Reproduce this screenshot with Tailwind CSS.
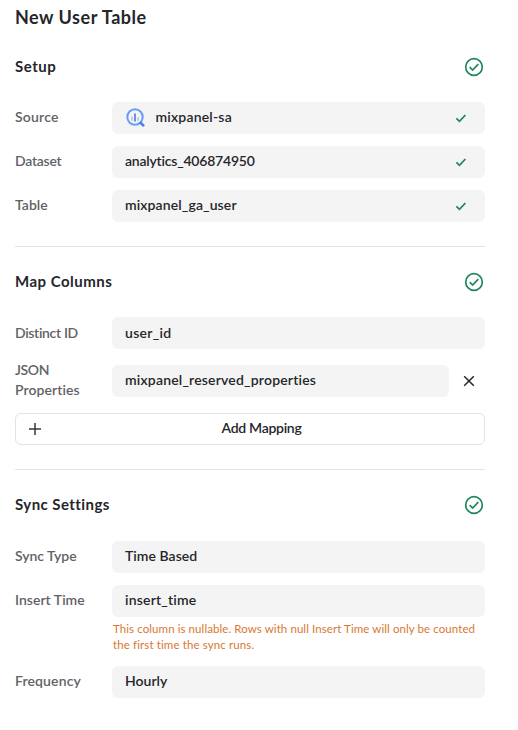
<!DOCTYPE html>
<html lang="en">
<head>
<meta charset="utf-8">
<title>New User Table</title>
<script src="https://cdn.jsdelivr.net/npm/@tailwindcss/browser@4"></script>
</head>
<body class="bg-white font-['Lato','Open_Sans',sans-serif] text-[#25262b] text-[14px] leading-5 font-semibold">
<svg class="hidden">
  <symbol id="done" viewBox="0 0 20 20"><g fill="none" stroke="#21875d" stroke-width="1.7"><circle cx="10" cy="10" r="8.3"/><path d="M5.7 10.2 8.6 13.1 14.3 7.2"/></g></symbol>
  <symbol id="check" viewBox="0 0 12 12"><path d="M1.4 6.3 4.5 9.3 10.4 3" fill="none" stroke="#21875d" stroke-width="1.8"/></symbol>
</svg>
<main class="w-[518px] h-[730px] pl-[15px] pr-[33px] pt-[5px] overflow-hidden">
  <h1 class="h-6 leading-6 text-[18px] font-bold tracking-[0.52px]">New User Table</h1>

  <section class="pt-[26px] pb-6 border-b border-[#e3e3e4]">
    <header class="flex h-[22px] mt-[1px] items-center justify-between"><h2 class="pb-0.5 text-[15px] font-bold tracking-[0.5px]">Setup</h2><svg class="size-5 mr-[1px]"><use href="#done"/></svg></header>
    <div class="mt-6 flex flex-col gap-3">
      <div class="flex h-8 items-center"><span class="w-[97px] pb-0.5 text-[#626266] tracking-[0.22px]">Source</span>
        <div class="flex h-8 flex-1 items-center rounded-md bg-[#f4f4f4] pl-[13px] pr-[18px]">
          <svg class="mr-[10.5px] size-5" viewBox="0 0 20 20" fill="none"><circle cx="10" cy="9" r="7.7" stroke="#6b9bf7" stroke-width="2"/><path d="M14.8 14 19 18.2" stroke="#4d80e8" stroke-width="2.6"/><path d="M10 5.5v8" stroke="#4d80e8" stroke-width="1.7"/><path d="M7 8.5v4.2M13 9.2v3.5" stroke="#a5c1fa" stroke-width="1.5"/></svg>
          <span class="flex-1 pb-0.5 tracking-[0.2px]">mixpanel-sa</span><svg class="size-3"><use href="#check"/></svg>
        </div>
      </div>
      <div class="flex h-8 items-center"><span class="w-[97px] pb-0.5 text-[#626266] tracking-[-0.25px]">Dataset</span>
        <div class="flex h-8 flex-1 items-center rounded-md bg-[#f4f4f4] pl-[13px] pr-[18px]"><span class="flex-1 pb-0.5 tracking-[-0.21px]">analytics_406874950</span><svg class="size-3"><use href="#check"/></svg></div>
      </div>
      <div class="flex h-8 items-center"><span class="w-[97px] pb-0.5 text-[#626266] tracking-[0.05px]">Table</span>
        <div class="flex h-8 flex-1 items-center rounded-md bg-[#f4f4f4] pl-[13px] pr-[18px]"><span class="flex-1 pb-0.5 tracking-[0.12px]">mixpanel_ga_user</span><svg class="size-3"><use href="#check"/></svg></div>
      </div>
    </div>
  </section>

  <section class="pt-6 pb-6 border-b border-[#e3e3e4]">
    <header class="flex h-[22px] items-center justify-between"><h2 class="pb-0.5 text-[15px] font-bold tracking-[0.48px]">Map Columns</h2><svg class="size-5 mr-[1px]"><use href="#done"/></svg></header>
    <div class="mt-6 flex h-8 items-center"><span class="w-[97px] text-[#626266] tracking-[-0.33px]">Distinct ID</span>
      <div class="flex h-8 flex-1 items-center rounded-md bg-[#f4f4f4] pl-[13px]"><span class="tracking-[0.3px]">user_id</span></div>
    </div>
    <div class="mt-3 flex h-10 items-center"><span class="w-[97px] pb-0.5 text-[#626266]"><span class="tracking-[-0.4px]">JSON</span><br><span class="tracking-[0.08px]">Properties</span></span>
      <div class="flex h-8 w-[337px] items-center rounded-md bg-[#f4f4f4] pl-[13px]"><span class="pb-0.5 tracking-[0.19px]">mixpanel_reserved_properties</span></div>
      <svg class="ml-[14px] size-3" viewBox="0 0 12 12"><path d="M1.2 1.2 10.8 10.8M10.8 1.2 1.2 10.8" stroke="#25262b" stroke-width="1.5"/></svg>
    </div>
    <button class="mt-3 flex h-8 w-full items-center rounded-md border border-[#e3e3e4] pl-[13px] pr-[2px]">
      <svg class="size-3" viewBox="0 0 12 12"><path d="M6 0v12M0 6h12" stroke="#38393d" stroke-width="1.5"/></svg><span class="flex-1 pb-0.5 tracking-[-0.3px]">Add Mapping</span>
    </button>
  </section>

  <section class="pt-6">
    <header class="flex h-[22px] items-center justify-between"><h2 class="pb-0.5 text-[15px] font-bold tracking-[0.44px]">Sync Settings</h2><svg class="size-5 mr-[1px]"><use href="#done"/></svg></header>
    <div class="mt-[25px] flex h-8 items-center"><span class="w-[97px] pb-0.5 text-[#626266] tracking-[-0.05px]">Sync Type</span>
      <div class="flex h-8 flex-1 items-center rounded-md bg-[#f4f4f4] pl-[13px]"><span class="pb-0.5 tracking-[0.04px]">Time Based</span></div>
    </div>
    <div class="mt-3 flex h-8 items-center"><span class="w-[97px] pb-0.5 text-[#626266] tracking-[0.02px]">Insert Time</span>
      <div class="flex h-8 flex-1 items-center rounded-md bg-[#f4f4f4] pl-[13px]"><span class="pb-0.5 tracking-[0.2px]">insert_time</span></div>
    </div>
    <p class="ml-[98px] mt-1 h-[33px] whitespace-nowrap text-[11.5px] leading-4 font-normal text-[#d97733]"><span class="tracking-[0.085px]">This column is nullable. Rows with null Insert Time will only be counted</span><br><span class="tracking-[0.12px]">the first time the sync runs.</span></p>
    <div class="mt-3 flex h-8 items-center"><span class="w-[97px] pb-0.5 text-[#626266] tracking-[0.13px]">Frequency</span>
      <div class="flex h-8 flex-1 items-center rounded-md bg-[#f4f4f4] pl-[13px]"><span class="pb-0.5 tracking-[0px]">Hourly</span></div>
    </div>
  </section>
</main>
</body>
</html>
